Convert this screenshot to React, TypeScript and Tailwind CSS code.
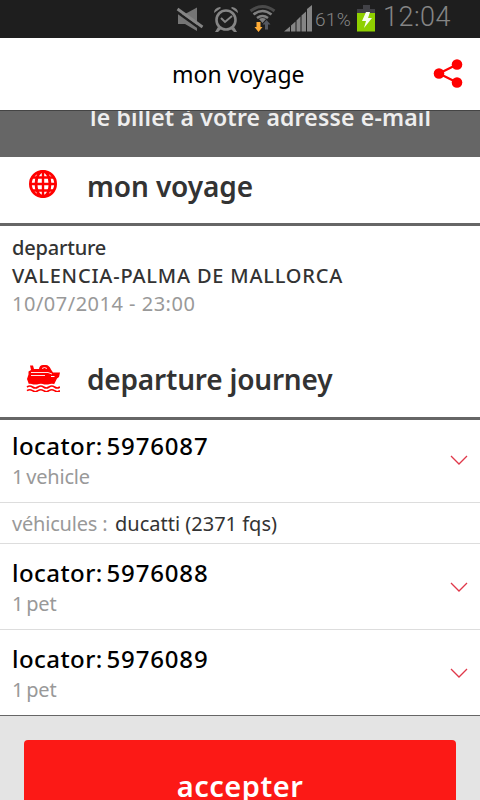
function StatusBar() {
    return (
        <div className="h-[38px] shrink-0 bg-[#1e1e1e] relative">
            <svg width="480" height="38" viewBox="0 0 480 38" className="block">
                {/* muted speaker */}
                <path d="M178 14h7l12-6.500v23.500l-12-7h-7z" fill="#757575" />
                <path d="M177 12l25 18" stroke="#1e1e1e" strokeWidth="2.500" />
                <path d="M177.500 9l25 18" stroke="#858585" strokeWidth="2.800" />
                {/* alarm clock */}
                <circle cx="226" cy="20" r="9.5" fill="none" stroke="#858585" strokeWidth="2.6" />
                <path d="M221 18l4 4 7-6" fill="none" stroke="#858585" strokeWidth="2" />
                <path d="M214 13q0-5 6-6l1 1zM238 13q0-5-6-6l-1 1zM218 27l-3 5h3l3-3zM234 27l3 5h-3l-3-3z" fill="#858585" />
                {/* wifi */}
                <path d="M250.500 11q12-9 24 0" fill="none" stroke="#4a4a4a" strokeWidth="3" />
                <path d="M253.500 14.500q9-7 18 0M257 18q5.500-4 11 0" fill="none" stroke="#808080" strokeWidth="2.600" />
                <path d="M259 19l3.500 4 3.500-4q-3.500-2-7 0z" fill="#808080" />
                <path d="M256.500 22h4v5h2l-4 5-4-5h2z" fill="#ffac36" />
                <path d="M266.500 20l4 4.500h-2.500v5h-3v-5h-2.500z" fill="#555962" />
                {/* signal */}
                <path d="M284 31.500l6-5v5zM291 31.500v-6l4.500-4v10zM296.500 31.500v-11l4-4v15zM301.500 31.500v-16l4.500-4v20zM307 31.500V9l5-4v26.500z" fill="#858585" />
                {/* battery */}
                <path d="M363 5h7v4h5v5h-18v-5h6z" fill="#424247" />
                <path d="M357 13h18v18.500h-18z" fill="#8fd000" />
                <path d="M366 12h4l-2 6h4l-8 10 2-7h-4z" fill="#f8fff0" />
            </svg>
            <span className="absolute left-[315px] top-[9px] text-[19px] leading-[22px] tracking-[0.3px] text-[#858585] font-[Roboto] font-light">61%</span>
            <span className="absolute left-[383px] top-[2px] text-[27px] leading-[30px] tracking-[0.5px] text-[#858585] font-[Roboto] font-light">12:04</span>
        </div>
    )
}

function Chevron() {
    return (
        <svg width="18" height="10" viewBox="0 0 18 10" className="shrink-0">
            <path d="M1 1l8 8 8-8" fill="none" stroke="#e0384a" strokeWidth="1.300" />
        </svg>
    )
}

function Locator({ code, detail }: { code: string, detail: string }) {
    return (
        <div className="flex items-center justify-between pl-3 pr-[12px] h-full">
            <div className="pt-[3px]">
                <h3 className="text-[24px] leading-[30px] tracking-[0.45px] [word-spacing:-3px] font-medium text-black whitespace-nowrap">locator: <span className="tracking-[0.85px]">{code}</span></h3>
                <p className="text-[20px] leading-[31px] tracking-[-0.2px] [word-spacing:-2px] text-[#999]">{detail}</p>
            </div>
            <Chevron />
        </div>
    )
}

export default function App() {
    return (
        <div className="w-[480px] h-[800px] overflow-hidden bg-white flex flex-col font-['Noto_Sans',sans-serif]">
            <StatusBar />
            <header className="h-[72px] shrink-0 flex items-center pl-[172px] pr-[17px] justify-between">
                <h1 className="text-[23px] leading-[30px] text-black whitespace-nowrap">mon voyage</h1>
                <svg width="30" height="30" viewBox="0 0 30 30">
                    <path d="M24 5.500L6 14.500l18 9" fill="none" stroke="#ff0000" strokeWidth="2.200" />
                    <circle cx="6" cy="14.500" r="5.300" fill="#ff0000" />
                    <circle cx="24" cy="5.500" r="5.300" fill="#ff0000" />
                    <circle cx="24" cy="23.500" r="5.300" fill="#ff0000" />
                </svg>
            </header>
            <div className="h-[47px] shrink-0 bg-[#666] border-t border-[#444] overflow-hidden pl-[90px]">
                <p className="text-[23px] leading-[30px] tracking-[0.18px] -mt-[9px] font-semibold text-[#eee] whitespace-nowrap">le billet à votre adresse e-mail</p>
            </div>

            <div className="h-[69px] shrink-0 border-b-[3px] border-[#666] flex pl-[28px]">
                <svg viewBox="0 0 30 30" className="mt-[12px] mr-[29px] w-[30px] h-[30px]">
                    <g fill="none" stroke="#ff0000" strokeWidth="2.800">
                        <circle cx="15" cy="15" r="12.600" />
                        <ellipse cx="15" cy="15" rx="7" ry="12.600" />
                        <path d="M15 2v26M2 15h26M5 8.500h20M5 21.500h20" strokeWidth="2.400" />
                    </g>
                </svg>
                <h2 className="text-[28px] leading-[40px] mt-[9px] font-semibold tracking-[-0.1px] text-[#333] whitespace-nowrap">mon voyage</h2>
            </div>
            <div className="h-[122px] shrink-0 pl-3 pt-[8px] text-[20px] leading-[28px] whitespace-nowrap">
                <p className="font-medium tracking-[-0.2px] text-[#333]">departure</p>
                <p className="font-medium tracking-[0.8px] text-[#333]">VALENCIA-PALMA DE MALLORCA</p>
                <p className="tracking-[0.5px] text-[#999]">10/07/2014 - 23:00</p>
            </div>

            <div className="h-[72px] shrink-0 border-b-[3px] border-[#666] flex pl-[26px]">
                <svg viewBox="0 0 34 28" className="mt-[16px] mr-[27px] w-[34px] h-[28px]">
                    <path d="M4 1.500h3l1 3.500h5q.5-4 4-4h3q3 0 5 4.500l2 3h7l-1 4.500-2 1.500-3 6H3L1 15l1.500-4.500v-3L5 6z" fill="#ff0000" />
                    <path d="M5 8.500h17l4 1.500M5 11.500h14M16 4.500q2.500-2 5 0" fill="none" stroke="#fff" strokeWidth="0.900" />
                    <path d="M25 12.500h3.500" stroke="#fff" strokeWidth="1" />
                    <path d="M1 22.500q3-2 5.500 0t5.500 0 5.500 0 5.500 0 5.500 0 5.500 0" fill="none" stroke="#fff" strokeWidth="3.400" />
                    <path d="M1 23q2.750-2 5.500 0t5.500 0 5.500 0 5.500 0 5.500 0 5.500 0M1 26.700q2.750-2 5.500 0t5.500 0 5.500 0 5.500 0 5.500 0 5.500 0" fill="none" stroke="#ff0000" strokeWidth="1.600" />
                </svg>
                <h2 className="text-[28px] leading-[40px] tracking-[-0.2px] mt-[11px] font-semibold text-[#333] whitespace-nowrap">departure journey</h2>
            </div>

            <div className="h-[83px] shrink-0 border-b border-[#ddd] pb-[2px]"><Locator code="5976087" detail="1 vehicle" /></div>
            <div className="h-[41px] shrink-0 border-b border-[#ddd] pl-3 text-[20px] leading-[41px] flex whitespace-nowrap">
                <span className="w-[103px] tracking-[-0.2px] text-[#999]">véhicules :</span>
                <span className="text-[#333]">ducatti (2371 fqs)</span>
            </div>
            <div className="h-[86px] shrink-0 border-b border-[#ddd]"><Locator code="5976088" detail="1 pet" /></div>
            <div className="h-[86px] shrink-0 border-b border-[#666]"><Locator code="5976089" detail="1 pet" /></div>

            <div className="h-[84px] shrink-0 bg-[#e4e4e4] px-6 pt-6 overflow-hidden">
                <button className="w-full h-[92px] rounded-[4px] bg-[#fc1916] text-white text-[29px] tracking-[0.5px] font-semibold leading-[92px]">accepter</button>
            </div>
        </div>
    )
}
